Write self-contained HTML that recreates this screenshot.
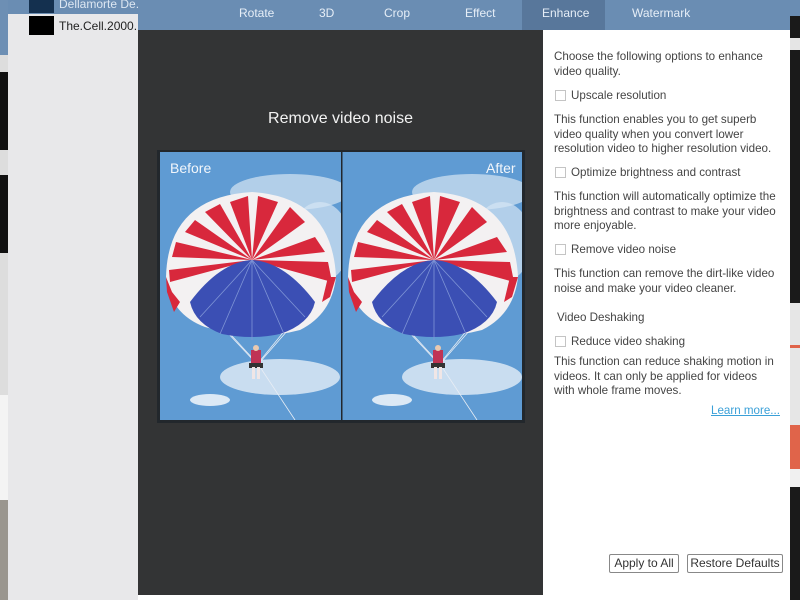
<!DOCTYPE html>
<html><head><meta charset="utf-8"><style>
*{margin:0;padding:0;box-sizing:border-box}
body{width:800px;height:600px;overflow:hidden;background:#fff;font-family:"Liberation Sans",sans-serif;position:relative}
.abs{position:absolute}
.tabs span{position:absolute;top:6px;color:#e6eef7;font-size:12px}
.panel{left:543px;top:30px;width:247px;height:565px;background:#fff;font-size:11.6px;color:#444;line-height:14.5px}
.panel p{position:absolute;left:11px;white-space:nowrap}
.cb{position:absolute;left:12px;width:11px;height:11px;border:1px solid #c4c4c4;background:#fff}
.lbl{position:absolute;left:28px}
.btn{position:absolute;top:524px;height:19px;border:1px solid #888;border-radius:2px;font-size:12px;line-height:17px;text-align:center;color:#333;background:#fff}
</style></head><body>
<div class="abs" style="left:0;top:0;width:8px;height:600px;background:#ddd"></div>
<div class="abs" style="left:0;top:0;width:8px;height:55px;background:#6d8fb4"></div>
<div class="abs" style="left:0;top:72px;width:8px;height:78px;background:#111"></div>
<div class="abs" style="left:0;top:175px;width:8px;height:78px;background:#111"></div>
<div class="abs" style="left:0;top:395px;width:8px;height:105px;background:#f4f4f4"></div>
<div class="abs" style="left:0;top:500px;width:8px;height:100px;background:#9a968f"></div>
<div class="abs" style="left:8px;top:0;width:130px;height:600px;background:#e8e8ea"></div>
<div class="abs" style="left:8px;top:0;width:130px;height:14px;background:#6a8db3"></div>
<div class="abs" style="left:29px;top:0;width:25px;height:13px;background:#14304f"></div>
<div class="abs" style="left:59px;top:-3px;font-size:12px;color:#dde7f2">Dellamorte De..</div>
<div class="abs" style="left:29px;top:16px;width:25px;height:19px;background:#000"></div>
<div class="abs" style="left:59px;top:19px;font-size:12px;color:#222">The.Cell.2000..</div>
<div class="abs tabs" style="left:138px;top:0;width:652px;height:30px;background:#6a8db3">
<div class="abs" style="left:384px;top:0;width:83px;height:30px;background:#58779b"></div>
<span style="left:101px">Rotate</span><span style="left:181px">3D</span><span style="left:246px">Crop</span><span style="left:327px">Effect</span><span style="left:404px">Enhance</span><span style="left:494px">Watermark</span>
</div>
<div class="abs" style="left:138px;top:30px;width:405px;height:565px;background:#333435"></div>
<div class="abs" style="left:138px;top:110px;width:405px;text-align:center;color:#f2f2f2;font-size:16px">Remove video noise</div>
<div class="abs" style="left:157px;top:150px;width:368px;height:273px;background:#22272c"></div>
<svg class="abs" style="left:160px;top:152px" width="362" height="268" viewBox="0 0 362 268">
<defs>
<g id="pc">
<rect width="181" height="268" fill="#5f9bd3"/>
<ellipse cx="130" cy="40" rx="60" ry="18" fill="#c7dcef" opacity=".8"/>
<ellipse cx="160" cy="90" rx="30" ry="40" fill="#d6e6f3" opacity=".7"/>
<ellipse cx="120" cy="225" rx="60" ry="18" fill="#dce9f5" opacity=".85"/>
<ellipse cx="50" cy="248" rx="20" ry="6" fill="#dce9f5"/>
<g stroke="#e9eef5" stroke-width=".8" fill="none"><line x1="20" y1="130" x2="95" y2="210"/><line x1="170" y1="130" x2="100" y2="210"/><line x1="50" y1="160" x2="96" y2="210"/><line x1="140" y1="160" x2="99" y2="210"/><line x1="100" y1="215" x2="135" y2="268"/></g>
<path d="M6 125 Q8 45 92 40 Q172 45 176 125 Q172 162 140 178 Q95 190 45 175 Q10 162 6 125Z" fill="#f3f1f2"/>
<g fill="#d8283c">
<path d="M92 108 L70 50 L88 44Z"/><path d="M92 108 L98 44 L118 50Z"/><path d="M92 108 L130 55 L145 70Z"/>
<path d="M92 108 L155 85 L165 100Z"/><path d="M92 108 L168 110 L172 130Z"/><path d="M92 108 L45 60 L60 52Z"/>
<path d="M92 108 L25 80 L35 68Z"/><path d="M92 108 L12 105 L16 90Z"/><path d="M92 108 L10 130 L9 118Z"/>
<path d="M6 125 L12 140 L20 150 L14 160 L7 140Z"/><path d="M176 125 L170 145 L162 150 L168 125Z"/>
</g>
<path d="M30 150 Q60 110 92 108 Q125 110 155 150 Q150 172 120 182 Q92 188 62 182 Q35 172 30 150Z" fill="#3b4fb4"/>
<g stroke="#7f95d6" stroke-width=".8"><line x1="92" y1="108" x2="60" y2="182"/><line x1="92" y1="108" x2="92" y2="188"/><line x1="92" y1="108" x2="124" y2="182"/><line x1="92" y1="108" x2="40" y2="165"/><line x1="92" y1="108" x2="145" y2="165"/></g>
<rect x="91" y="198" width="10" height="14" fill="#c03355"/><circle cx="96" cy="196" r="3" fill="#e8c9b0"/>
<rect x="89" y="211" width="14" height="5" fill="#333"/><rect x="92" y="215" width="3" height="12" fill="#f0e6e6"/><rect x="97" y="215" width="3" height="12" fill="#f0e6e6"/>
</g></defs>
<use href="#pc" x="0" y="0"/>
<use href="#pc" x="182" y="0"/>
<rect x="181" y="0" width="1.5" height="268" fill="#22272c"/>
<text x="10" y="21" font-family="Liberation Sans" font-size="14" fill="#f2f6fb">Before</text>
<text x="326" y="21" font-family="Liberation Sans" font-size="14" fill="#f2f6fb">After</text>
</svg>
<div class="abs panel">
<p style="top:20px">Choose the following options to enhance<br>video quality.</p>
<div class="cb" style="top:60px"></div><div class="lbl" style="top:59px">Upscale resolution</div>
<p style="top:83px">This function enables you to get superb<br>video quality when you convert lower<br>resolution video to higher resolution video.</p>
<div class="cb" style="top:137px"></div><div class="lbl" style="top:136px">Optimize brightness and contrast</div>
<p style="top:160px">This function will automatically optimize the<br>brightness and contrast to make your video<br>more enjoyable.</p>
<div class="cb" style="top:214px"></div><div class="lbl" style="top:213px">Remove video noise</div>
<p style="top:237px">This function can remove the dirt-like video<br>noise and make your video cleaner.</p>
<p style="top:281px;left:14px">Video Deshaking</p>
<div class="cb" style="top:306px"></div><div class="lbl" style="top:305px">Reduce video shaking</div>
<p style="top:325px">This function can reduce shaking motion in<br>videos. It can only be applied for videos<br>with whole frame moves.</p>
<div class="abs" style="left:168px;top:374px;color:#3aa0d8;text-decoration:underline">Learn more...</div>
<div class="btn" style="left:66px;width:70px">Apply to All</div>
<div class="btn" style="left:144px;width:96px">Restore Defaults</div>
</div>
<div class="abs" style="left:790px;top:0;width:10px;height:600px;background:#1a1a1a"></div>
<div class="abs" style="left:790px;top:0;width:10px;height:16px;background:#6a8db3"></div>
<div class="abs" style="left:790px;top:38px;width:10px;height:12px;background:#e5e5e5"></div>
<div class="abs" style="left:790px;top:303px;width:10px;height:125px;background:#e6e6e6"></div>
<div class="abs" style="left:790px;top:345px;width:10px;height:3px;background:#e0644a"></div>
<div class="abs" style="left:790px;top:425px;width:10px;height:44px;background:#e0644a"></div>
<div class="abs" style="left:790px;top:469px;width:10px;height:18px;background:#f0f0f0"></div>
</body></html>
